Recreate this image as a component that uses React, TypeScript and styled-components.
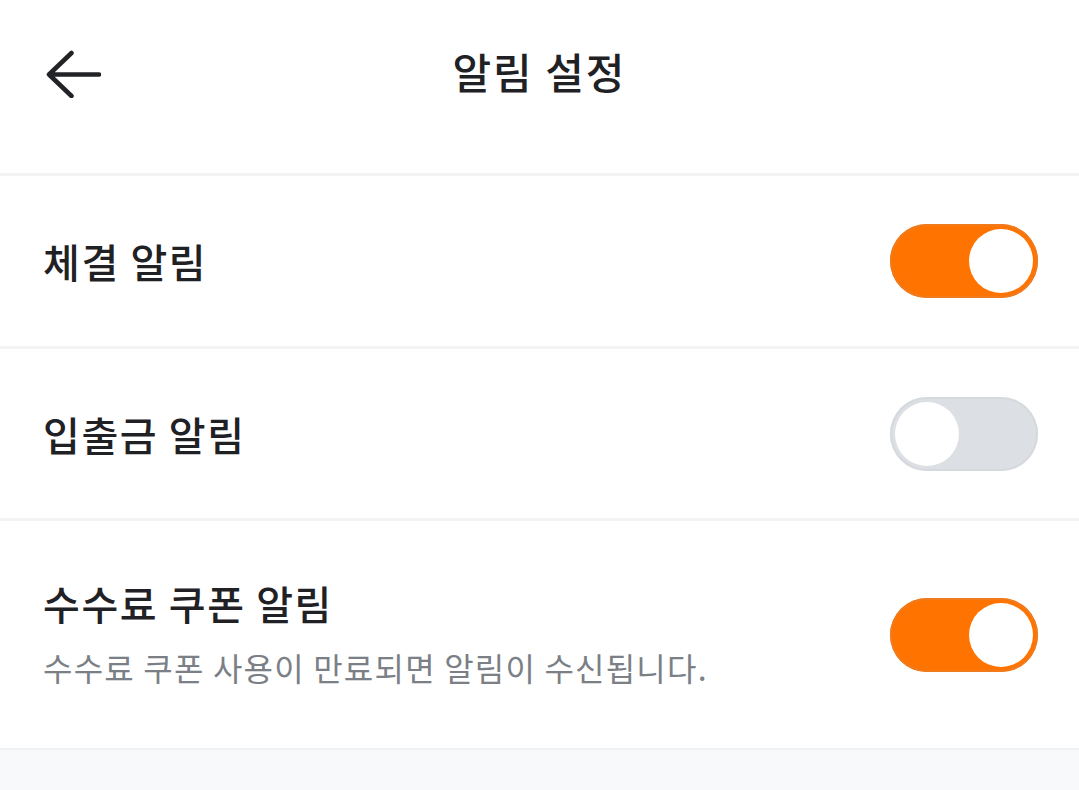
import React, { useState } from "react";
import styled, { createGlobalStyle } from "styled-components";

const Global = createGlobalStyle`
  html, body { margin: 0; padding: 0; background: #ffffff; }
  body { font-family: "Noto Sans CJK KR", "Noto Sans", sans-serif; color: #1f2125; }
  * { box-sizing: border-box; }
`;

const Page = styled.div`
  width: 1079px;
  min-height: 790px;
  display: flex;
  flex-direction: column;
  background: #ffffff;
`;

const Header = styled.header`
  height: 173px;
  padding-bottom: 26px;
  display: grid;
  grid-template-columns: 1fr auto 1fr;
  align-items: center;
`;

const BackButton = styled.button`
  justify-self: start;
  margin-left: 45px;
  padding: 0;
  border: 0;
  background: none;
  display: flex;
  cursor: pointer;
`;

const Title = styled.h1`
  margin: 0 0 4px;
  font-size: 42px;
  font-weight: 500;
  letter-spacing: 2px;
  line-height: 1.4;
  color: #1f2125;
`;

const Divider = styled.div`
  height: 3px;
  background: #f2f3f5;
`;

const Row = styled.div<{ $h: number }>`
  height: ${(p) => p.$h}px;
  padding: 0 41px 0 43px;
  display: flex;
  align-items: center;
  justify-content: space-between;
`;

const TextBlock = styled.div`
  display: flex;
  flex-direction: column;
  gap: 14px;
  margin-bottom: 4px;
`;

const Label = styled.div`
  font-size: 40px;
  font-weight: 500;
  letter-spacing: 1.6px;
  line-height: 1.4;
  color: #1f2125;
`;

const Desc = styled.div`
  font-size: 32px;
  font-weight: 400;
  letter-spacing: 1.2px;
  line-height: 1.4;
  color: #7b7f86;
`;

const Track = styled.button<{ $on: boolean }>`
  width: 148px;
  height: 74px;
  padding: 0 5px;
  border: 0;
  border-radius: 37px;
  display: flex;
  align-items: center;
  justify-content: ${(p) => (p.$on ? "flex-end" : "flex-start")};
  background: ${(p) => (p.$on ? "#ff7300" : "#dcdfe4")};
  box-shadow: inset 0 0 0 2px ${(p) => (p.$on ? "#f07a1c" : "#d6d9de")};
  cursor: pointer;
`;

const Knob = styled.span`
  width: 64px;
  height: 64px;
  border-radius: 50%;
  background: #ffffff;
`;

const Footer = styled.div`
  flex: 1;
  min-height: 42px;
  background: #f8f9fa;
  border-top: 2px solid #f0f1f3;
`;

function Toggle({ on, onClick }: { on: boolean; onClick: () => void }) {
  return (
    <Track $on={on} onClick={onClick} aria-pressed={on}>
      <Knob />
    </Track>
  );
}

export default function App() {
  const [a, setA] = useState(true);
  const [b, setB] = useState(false);
  const [c, setC] = useState(true);
  return (
    <Page>
      <Global />
      <Header>
        <BackButton aria-label="뒤로">
          <svg width="56" height="48" viewBox="0 0 56 48" fill="none">
            <path
              d="M54 24.5H4.5M26.5 3L4 24.5L26.5 46"
              stroke="#222326"
              strokeWidth="4.5"
              strokeLinecap="round"
              strokeLinejoin="round"
            />
          </svg>
        </BackButton>
        <Title>알림 설정</Title>
        <div />
      </Header>
      <Divider />
      <Row $h={170}>
        <Label>체결 알림</Label>
        <Toggle on={a} onClick={() => setA(!a)} />
      </Row>
      <Divider />
      <Row $h={169}>
        <Label>입출금 알림</Label>
        <Toggle on={b} onClick={() => setB(!b)} />
      </Row>
      <Divider />
      <Row $h={227}>
        <TextBlock>
          <Label>수수료 쿠폰 알림</Label>
          <Desc>수수료 쿠폰 사용이 만료되면 알림이 수신됩니다.</Desc>
        </TextBlock>
        <Toggle on={c} onClick={() => setC(!c)} />
      </Row>
      <Footer />
    </Page>
  );
}
